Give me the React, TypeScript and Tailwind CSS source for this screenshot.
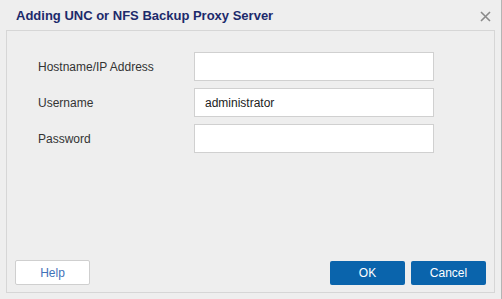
import React from "react";

export default function App() {
  const font = { fontFamily: '"Liberation Sans", Arial, sans-serif' };
  return (
    <div
      className="w-[502px] h-[299px] bg-[#eeeeee] flex flex-col border-r border-[#b4b4b4] overflow-hidden"
      style={font}
    >
      <div className="h-[30px] flex items-start justify-between pl-[16px] pr-[10px] pt-[8px] shrink-0">
        <span className="text-[13px] font-bold text-[#1c2a6b] leading-[15px]">
          Adding UNC or NFS Backup Proxy Server
        </span>
        <svg width="11" height="11" viewBox="0 0 11 11" className="mt-[3px]">
          <path d="M1 1 L10 10 M10 1 L1 10" stroke="#8a8a8a" strokeWidth="1.6" />
        </svg>
      </div>
      <div className="mx-[6px] mb-[6px] flex-1 border border-[#d6d6d6] flex flex-col px-[8px] pb-[7px]">
        <div className="grid grid-cols-[156px_240px] gap-y-[7px] pl-[23px] pt-[21px]">
          <label className="text-[12px] text-[#333333] flex items-center h-[29px]">Hostname/IP Address</label>
          <div className="h-[29px] bg-white border border-[#d0d0d0]" />
          <label className="text-[12px] text-[#333333] flex items-center h-[29px]">Username</label>
          <div className="h-[29px] bg-white border border-[#d0d0d0] flex items-center pl-[10px] text-[12px] text-[#222222]">
            administrator
          </div>
          <label className="text-[12px] text-[#333333] flex items-center h-[29px]">Password</label>
          <div className="h-[29px] bg-white border border-[#d0d0d0]" />
        </div>
        <div className="mt-auto flex items-center justify-between">
          <button className="w-[75px] h-[25px] bg-white border border-[#cfcfcf] rounded-[2px] text-[12px] text-[#3f72b8]">
            Help
          </button>
          <div className="flex gap-[6px]">
            <button className="w-[75px] h-[24px] bg-[#0a64ac] rounded-[2px] text-[12px] text-white">OK</button>
            <button className="w-[75px] h-[24px] bg-[#0a64ac] rounded-[2px] text-[12px] text-white">Cancel</button>
          </div>
        </div>
      </div>
    </div>
  );
}
